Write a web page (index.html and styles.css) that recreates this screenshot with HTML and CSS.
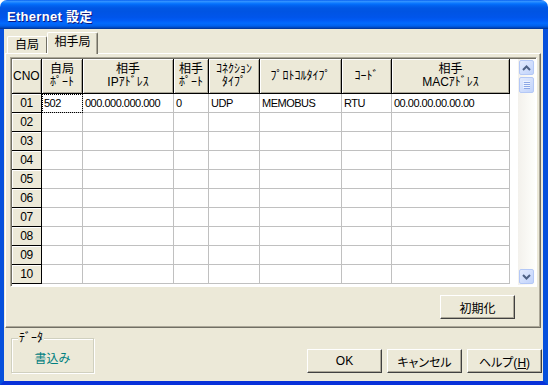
FILE: index.html
```html
<!DOCTYPE html>
<html lang="ja">
<head>
    <meta charset="UTF-8">
    <title>Ethernet 設定</title>
    <link rel="stylesheet" href="styles.css">
</head>
<body>
    <div class="window">
        <div class="titlebar">Ethernet 設定</div>
        <div class="frame">
            <div class="tabs">
                <div class="tab">自局</div>
                <div class="tab active">相手局</div>
            </div>
            <div class="panel">
                <div class="grid">
                    <div class="grid-body">
                        <table class="sheet">
                            <colgroup>
                                <col style="width:30px"><col style="width:41px"><col style="width:91px"><col style="width:35px">
                                <col style="width:51px"><col style="width:82px"><col style="width:50px"><col style="width:118px">
                            </colgroup>
                            <thead>
                                <tr>
                                    <th class="cno">CNO</th>
                                    <th>自局<br>ﾎﾟｰﾄ</th>
                                    <th>相手<br>IPｱﾄﾞﾚｽ</th>
                                    <th>相手<br>ﾎﾟｰﾄ</th>
                                    <th>ｺﾈｸｼｮﾝ<br>ﾀｲﾌﾟ</th>
                                    <th>ﾌﾟﾛﾄｺﾙﾀｲﾌﾟ</th>
                                    <th>ｺｰﾄﾞ</th>
                                    <th>相手<br>MACｱﾄﾞﾚｽ</th>
                                </tr>
                            </thead>
                            <tbody>
                                <tr><td class="rh">01</td><td class="focus">502</td><td>000.000.000.000</td><td>0</td><td>UDP</td><td>MEMOBUS</td><td>RTU</td><td>00.00.00.00.00.00</td></tr>
                                <tr><td class="rh">02</td><td></td><td></td><td></td><td></td><td></td><td></td><td></td></tr>
                                <tr><td class="rh">03</td><td></td><td></td><td></td><td></td><td></td><td></td><td></td></tr>
                                <tr><td class="rh">04</td><td></td><td></td><td></td><td></td><td></td><td></td><td></td></tr>
                                <tr><td class="rh">05</td><td></td><td></td><td></td><td></td><td></td><td></td><td></td></tr>
                                <tr><td class="rh">06</td><td></td><td></td><td></td><td></td><td></td><td></td><td></td></tr>
                                <tr><td class="rh">07</td><td></td><td></td><td></td><td></td><td></td><td></td><td></td></tr>
                                <tr><td class="rh">08</td><td></td><td></td><td></td><td></td><td></td><td></td><td></td></tr>
                                <tr><td class="rh">09</td><td></td><td></td><td></td><td></td><td></td><td></td><td></td></tr>
                                <tr><td class="rh">10</td><td></td><td></td><td></td><td></td><td></td><td></td><td></td></tr>
                            </tbody>
                        </table>
                    </div>
                    <div class="vscroll">
                        <div class="sb-btn">
                            <svg width="9" height="6" viewBox="0 0 9 6"><path d="M1 5 L4.5 1.5 L8 5" fill="none" stroke="#4d6185" stroke-width="2"/></svg>
                        </div>
                        <div class="sb-thumb">
                            <svg width="7" height="8" viewBox="0 0 7 8"><path d="M0 0.5h7M0 2.5h7M0 4.5h7M0 6.5h7" stroke="#eef3fe"/><path d="M1 1.5h7M1 3.5h7M1 5.5h7M1 7.5h7" stroke="#8ca7e6"/></svg>
                        </div>
                        <div class="sb-space"></div>
                        <div class="sb-btn">
                            <svg width="9" height="6" viewBox="0 0 9 6"><path d="M1 1 L4.5 4.5 L8 1" fill="none" stroke="#4d6185" stroke-width="2"/></svg>
                        </div>
                    </div>
                </div>
                <div class="panel-actions">
                    <button class="btn">初期化</button>
                </div>
            </div>
            <div class="footer">
                <div class="group">
                    <span class="group-label">ﾃﾞｰﾀ</span>
                    <div class="write">書込み</div>
                </div>
                <div class="buttons">
                    <button class="btn">OK</button>
                    <button class="btn">キャンセル</button>
                    <button class="btn">ヘルプ(<u>H</u>)</button>
                </div>
            </div>
        </div>
    </div>
</body>
</html>
```

FILE: styles.css
```css
body {
    margin: 0;
    background: #fff;
    font-family: "Liberation Sans", "Noto Sans CJK JP", sans-serif;
    font-size: 12px;
    color: #000;
}
.window {
    width: 548px;
    height: 385px;
    display: flex;
    flex-direction: column;
}
.titlebar {
    flex: none;
    height: 29px;
    box-sizing: border-box;
    padding: 2px 0 0 7px;
    display: flex;
    align-items: center;
    border-radius: 7px 7px 0 0;
    background: linear-gradient(to bottom, #0058ee 0%, #3593ff 4%, #288eff 7%, #127dff 10%, #036ffc 14%, #0262ee 20%, #0057e5 28%, #0054e3 40%, #0055eb 60%, #005bf5 70%, #026afe 80%, #0062ef 88%, #0052d6 93%, #0040ab 97%, #003092 100%);
    color: #fff;
    font-size: 13px;
    font-weight: bold;
    letter-spacing: 0.3px;
    text-shadow: 1px 1px #0a1883;
}
.frame {
    flex: 1;
    display: flex;
    flex-direction: column;
    background: #ece9d8;
    border-left: 4px solid #0650dc;
    border-right: 5px solid #0650dc;
    border-bottom: 4px solid #0831d9;
}
.tabs {
    height: 24px;
    display: flex;
    align-items: flex-end;
    padding-left: 3px;
}
.tab {
    width: 40px;
    height: 17px;
    box-sizing: border-box;
    border: 1px solid #fff;
    border-right-color: #716f64;
    border-bottom: none;
    border-radius: 2px 2px 0 0;
    text-align: center;
    line-height: 16px;
}
.tab.active {
    position: relative;
    z-index: 1;
    width: 51px;
    height: 22px;
    margin-bottom: -1px;
    background: #ece9d8;
    line-height: 18px;
    box-shadow: inset -1px 0 #aca899;
}
.panel {
    width: 536px;
    height: 275px;
    margin-left: 1px;
    box-sizing: border-box;
    padding: 3px 3px 0 4px;
    border: 1px solid;
    border-color: #fff #716f64 #716f64 #fff;
    box-shadow: inset -1px -1px #aca899;
}
.grid {
    width: 527px;
    height: 230px;
    box-sizing: border-box;
    display: flex;
    padding: 1px;
    border: 1px solid;
    border-color: #aca899 #fff #fff #aca899;
    box-shadow: inset 1px 1px #716f64;
    background: #fff;
}
.grid-body {
    width: 506px;
    overflow: hidden;
}
.sheet {
    width: 498px;
    table-layout: fixed;
    border-collapse: separate;
    border-spacing: 0;
}
.sheet th {
    height: 34px;
    padding: 0;
    background: #ece9d8;
    border-right: 1px solid #000;
    border-bottom: 1px solid #000;
    box-shadow: inset 1px 1px #fff, inset -1px -1px #aca899;
    font-weight: normal;
    line-height: 13px;
    white-space: nowrap;
}
.sheet th.cno {
    text-align: left;
    padding-left: 1px;
}
.sheet td {
    height: 18px;
    padding: 0 0 0 2px;
    border-right: 1px solid #c0c0c0;
    border-bottom: 1px solid #c0c0c0;
    font-size: 11px;
    letter-spacing: -0.5px;
    white-space: nowrap;
    overflow: hidden;
}
.sheet td.rh {
    padding: 0;
    background: #ece9d8;
    border-right-color: #000;
    border-bottom-color: #000;
    box-shadow: inset 1px 1px #fff;
    text-align: center;
    font-size: 12px;
}
.sheet td.focus {
    outline: 1px dotted #000;
    outline-offset: -1px;
}
.vscroll {
    width: 17px;
    flex: none;
    display: flex;
    flex-direction: column;
    padding: 1px 0;
    box-sizing: border-box;
    background: linear-gradient(to right, #f3f1ec, #fefefb);
}
.sb-btn, .sb-thumb {
    width: 15px;
    height: 15px;
    margin-left: 1px;
    box-sizing: border-box;
    border: 1px solid #b4c8f6;
    border-radius: 2px;
    background: linear-gradient(135deg, #e3ebfe, #c1d3fb);
    display: flex;
    align-items: center;
    justify-content: center;
}
.sb-thumb {
    height: 16px;
    margin-top: 2px;
}
.sb-space {
    flex: 1;
}
.panel-actions {
    display: flex;
    justify-content: flex-end;
    padding: 8px 22px 0 0;
}
.btn {
    width: 75px;
    height: 24px;
    padding: 0;
    background: #ece9d8;
    border: 1px solid;
    border-color: #fff #404040 #404040 #fff;
    box-shadow: inset -1px -1px #aca899;
    font: inherit;
    font-feature-settings: "palt";
    color: #000;
}
.footer {
    flex: 1;
    display: flex;
    align-items: flex-end;
    padding: 0 1px 8px 7px;
}
.group {
    position: relative;
    width: 83px;
    height: 35px;
    box-sizing: border-box;
    border: 1px solid #d0d0bf;
    box-shadow: inset 1px 1px #fff, 1px 1px #fff;
    display: flex;
    justify-content: center;
    align-items: center;
    padding-top: 3px;
}
.group-label {
    position: absolute;
    top: -7px;
    left: 6px;
    padding: 0 1px;
    background: #ece9d8;
    line-height: 12px;
}
.write {
    color: #008080;
}
.buttons {
    margin-left: auto;
    display: flex;
    gap: 5px;
}
```
